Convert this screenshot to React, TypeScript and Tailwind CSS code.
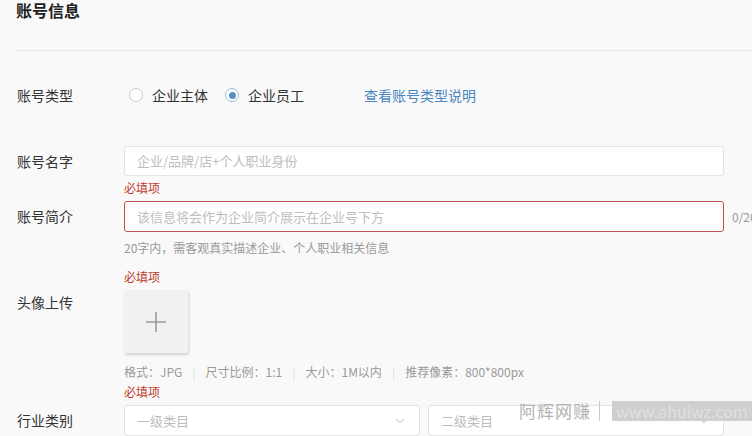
import { ChevronDown } from "lucide-react"

const font = { fontFamily: '"Noto Sans CJK SC", "Noto Sans", sans-serif' }

function Label({ children }: { children: string }) {
  return <div className="w-[107px] shrink-0 text-[14px] text-[#333]">{children}</div>
}

function Required({ className = "" }: { className?: string }) {
  return <div className={`ml-[124px] text-[12px] leading-[16px] text-[#c0392b] ${className}`}>必填项</div>
}

function Radio({ checked, label }: { checked?: boolean; label: string }) {
  return (
    <label className="flex items-center gap-[9px] text-[14px] text-[#333]">
      <span
        className={`flex h-[14px] w-[14px] items-center justify-center rounded-full border ${
          checked ? "border-[#9cbcdc] bg-white" : "border-[#c8c8c8] bg-white"
        }`}
      >
        {checked && <span className="h-[7px] w-[7px] rounded-full bg-[#5a8fc4]" />}
      </span>
      {label}
    </label>
  )
}

const specs = ["格式：JPG", "尺寸比例：1:1", "大小：1M以内", "推荐像素：800*800px"]

export default function App() {
  return (
    <div style={font} className="relative h-[436px] w-[752px] overflow-hidden bg-[#f9f9f9]">
      {/* section title */}
      <div className="ml-[16px] h-[51px] border-b border-[#e6e6e6]">
        <h1 className="text-[16px] font-bold leading-[20px] text-[#222]">账号信息</h1>
      </div>

      {/* account type */}
      <div className="mt-[29px] flex h-[30px] items-center pl-[17px]">
        <Label>账号类型</Label>
        <div className="flex items-center gap-[17px] pl-[5px]">
          <Radio label="企业主体" />
          <Radio checked label="企业员工" />
        </div>
        <a className="ml-[60px] text-[14px] text-[#4a86c0]">查看账号类型说明</a>
      </div>

      {/* account name */}
      <div className="mt-[36px] flex items-center pl-[17px]">
        <Label>账号名字</Label>
        <div className="flex h-[30px] w-[600px] shrink-0 items-center rounded-[3px] border border-[#e4e4e4] bg-white px-[12px] text-[13px] text-[#bdbdbd]">
          企业/品牌/店+个人职业身份
        </div>
      </div>
      <Required className="mt-[4px]" />

      {/* account intro */}
      <div className="mt-[5px] flex items-center pl-[17px]">
        <Label>账号简介</Label>
        <div className="flex h-[31px] w-[600px] shrink-0 items-center rounded-[3px] border border-[#c0504d] bg-white px-[12px] text-[13px] text-[#bdbdbd]">
          该信息将会作为企业简介展示在企业号下方
        </div>
        <span className="ml-[8px] shrink-0 text-[12px] text-[#999]">0/20</span>
      </div>
      <div className="ml-[124px] mt-[8px] text-[12px] leading-[16px] text-[#999]">
        20字内，需客观真实描述企业、个人职业相关信息
      </div>
      <Required className="mt-[13px]" />

      {/* avatar upload */}
      <div className="mt-[5px] flex items-start pl-[17px]">
        <div className="mt-[2px]">
          <Label>头像上传</Label>
        </div>
        <div className="flex h-[63px] w-[64px] items-center justify-center rounded-[2px] bg-[#f1f1f1] shadow-[1px_2px_3px_rgba(0,0,0,0.15)]">
          <svg width="22" height="22" viewBox="0 0 22 22" className="text-[#9a9a9a]">
            <path d="M11 1v20M1 11h20" stroke="currentColor" strokeWidth="1.6" fill="none" />
          </svg>
        </div>
      </div>
      <div className="ml-[124px] mt-[11px] flex items-center text-[12px] leading-[16px] text-[#999]">
        {specs.map((s, i) => (
          <span key={s} className="flex items-center">
            {i > 0 && <span className="mx-[10px] text-[#ddd]">|</span>}
            {s}
          </span>
        ))}
      </div>
      <Required className="mt-[4px]" />

      {/* industry */}
      <div className="mt-[5px] flex items-center pl-[17px]">
        <Label>行业类别</Label>
        <div className="flex h-[31px] w-[296px] shrink-0 items-center justify-between rounded-[3px] border border-[#e4e4e4] bg-white px-[12px] text-[13px] text-[#bdbdbd]">
          一级类目
          <ChevronDown className="h-[14px] w-[14px] text-[#aaa]" strokeWidth={1.5} />
        </div>
        <div className="ml-[8px] flex h-[31px] w-[296px] shrink-0 items-center justify-between rounded-[3px] border border-[#e4e4e4] bg-white px-[12px] text-[13px] text-[#bdbdbd]">
          二级类目
          <ChevronDown className="h-[14px] w-[14px] text-[#aaa]" strokeWidth={1.5} />
        </div>
      </div>

      {/* site mark */}
      <div className="absolute left-[519px] top-[398px] flex items-center gap-[8px]">
        <span className="text-[17px] tracking-[1px] text-[#b4b4b4]">阿辉网赚</span>
        <span className="h-[20px] w-px bg-[#c8c8c8]" />
        <span className="ml-[4px] bg-[#cfcfcf] px-[4px] text-[16px] leading-[20px] text-[#e0e0e0] blur-[0.6px]">
          www.ahuiwz.com
        </span>
      </div>
    </div>
  )
}
